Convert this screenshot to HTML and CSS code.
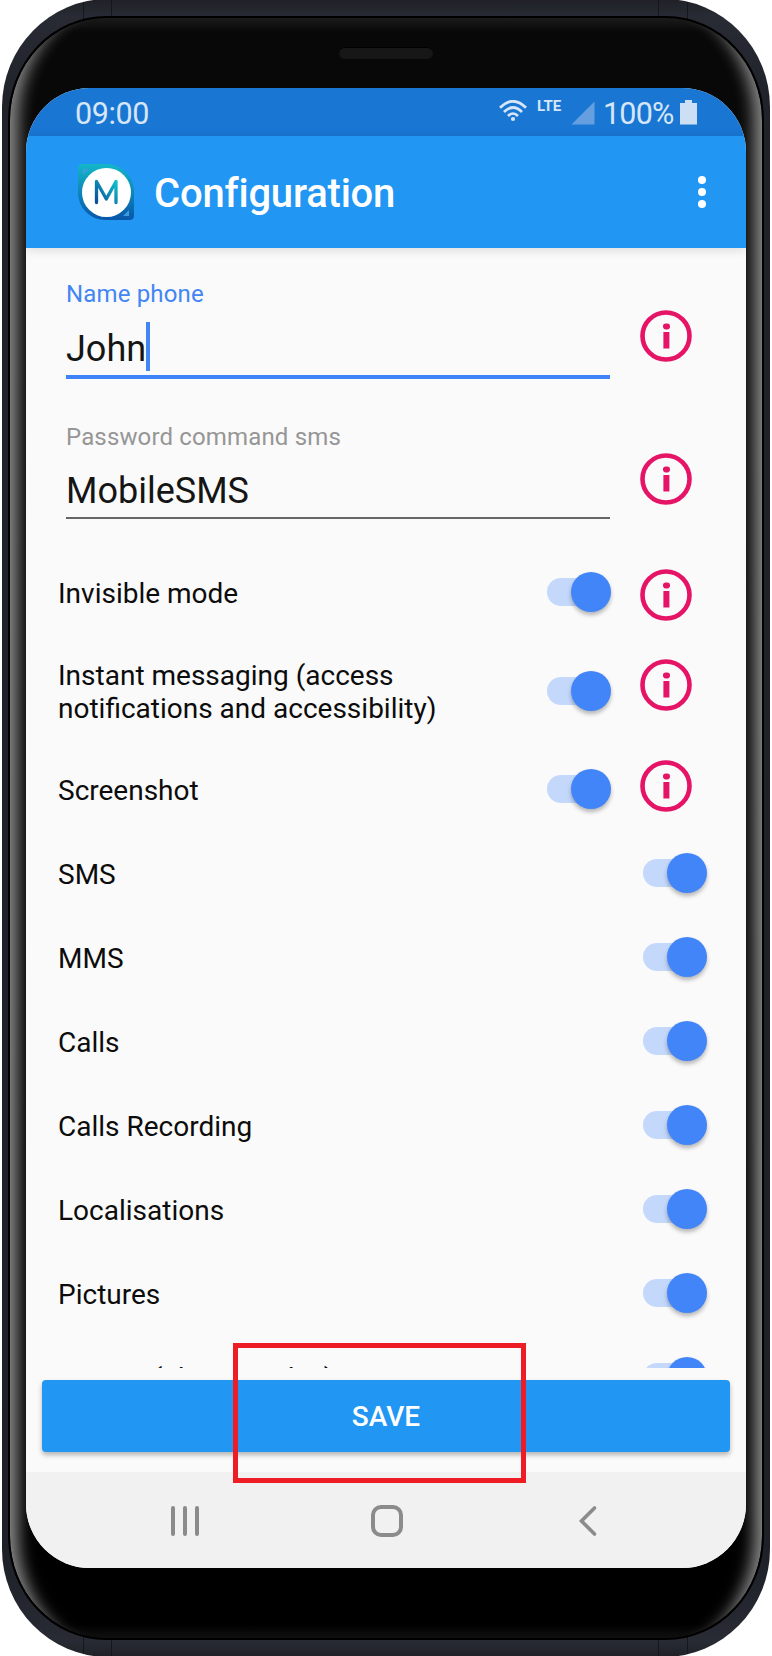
FILE: index.html
```html
<!DOCTYPE html>
<html lang="en">
<head>
<meta charset="utf-8">
<title>Configuration</title>
<link rel="stylesheet" href="styles.css">
</head>
<body>
<svg class="defs" width="0" height="0">
  <symbol id="info" viewBox="0 0 52 52">
    <circle cx="26" cy="26" r="23.5" fill="none" stroke="#e51467" stroke-width="4.6"/>
    <rect x="23" y="13.4" width="7" height="6" rx="2.8" fill="#e51467"/>
    <rect x="23.4" y="22" width="6" height="16.5" fill="#e51467"/>
  </symbol>
</svg>
<div class="phone">
  <div class="bezel">
    <div class="earpiece"></div>
    <div class="screen">
      <div class="status">
        <span class="time">09:00</span>
        <svg class="wifi" width="28" height="22" viewBox="0 0 28 22" fill="none" stroke="#d6e6f7" stroke-width="2.7">
          <path d="M1 7.800Q14-5.200 27 7.800"/><path d="M5 12Q14 3 23 12"/><path d="M9 16Q14 11 19 16"/>
          <circle cx="14" cy="19" r="2.100" fill="#d6e6f7" stroke="none"/>
        </svg>
        <span class="lte">LTE</span>
        <svg class="signal" width="24" height="24" viewBox="0 0 24 24"><path d="M0.5 23.5L23.5 0.5V23.5Z" fill="#659fe0"/></svg>
        <span class="percent">100%</span>
        <svg class="battery" width="17" height="25" viewBox="0 0 17 25"><path d="M5 0h7v3h5v21.5H0V3h5z" fill="#cddff4"/></svg>
      </div>
      <div class="appbar">
        <svg class="logo" width="57" height="57" viewBox="0 0 57 57">
          <defs>
            <linearGradient id="lg" x1="0" y1="0" x2="0" y2="1"><stop offset="0" stop-color="#12b7c8"/><stop offset="1" stop-color="#0856aa"/></linearGradient>
            <linearGradient id="mg" x1="1" y1="0" x2="0" y2="1"><stop offset="0" stop-color="#10c0cc"/><stop offset="1" stop-color="#0b4c9a"/></linearGradient>
          </defs>
          <path d="M5 0H28C43 0 56 12 56 28V52Q56 56 51 56H28C12 56 0 44 0 28V5Q0 0 5 0Z" fill="url(#lg)"/>
          <path d="M5 11V5H11ZM51 46V52H45Z" fill="#3d9ce0"/>
          <circle cx="28.500" cy="28.500" r="24.500" fill="#fff"/>
          <path d="M18.500 38.500V17.500L28.300 35L38 17.500V38.500" fill="none" stroke="url(#mg)" stroke-width="3.300" stroke-linejoin="round" stroke-linecap="round"/>
        </svg>
        <h1 class="title">Configuration</h1>
        <svg class="more" width="8" height="32" viewBox="0 0 8 32" fill="#fff"><circle cx="4" cy="4" r="4"/><circle cx="4" cy="16" r="4"/><circle cx="4" cy="28" r="4"/></svg>
      </div>
      <div class="list">
        <div class="field focused">
          <div class="entry"><div class="label">Name phone</div><div class="value">John<i class="caret"></i></div></div>
          <svg class="info"><use href="#info"/></svg>
        </div>
        <div class="field">
          <div class="entry"><div class="label">Password command sms</div><div class="value">MobileSMS</div></div>
          <svg class="info"><use href="#info"/></svg>
        </div>
        <div class="row invisible"><span class="text">Invisible mode</span><span class="switch"></span><svg class="info"><use href="#info"/></svg></div>
        <div class="row instant"><span class="text">Instant messaging (access<br>notifications and accessibility)</span><span class="switch"></span><svg class="info"><use href="#info"/></svg></div>
        <div class="row shot"><span class="text">Screenshot</span><span class="switch"></span><svg class="info"><use href="#info"/></svg></div>
        <div class="row"><span class="text">SMS</span><span class="switch"></span></div>
        <div class="row"><span class="text">MMS</span><span class="switch"></span></div>
        <div class="row"><span class="text">Calls</span><span class="switch"></span></div>
        <div class="row"><span class="text">Calls Recording</span><span class="switch"></span></div>
        <div class="row"><span class="text">Localisations</span><span class="switch"></span></div>
        <div class="row"><span class="text">Pictures</span><span class="switch"></span></div>
        <div class="row last"><span class="text">Picture (photo quality)</span><span class="switch"></span></div>
      </div>
      <div class="footer">
        <div class="save">SAVE</div>
        <div class="highlight"></div>
      </div>
      <div class="nav">
        <svg width="30" height="32" viewBox="0 0 30 32" stroke="#8b8b8b" stroke-width="4" stroke-linecap="round"><path d="M3 3V29M15 3V29M27 3V29"/></svg>
        <svg class="home" width="34" height="34" viewBox="0 0 34 34" fill="none" stroke="#8b8b8b" stroke-width="4"><rect x="3" y="3" width="28" height="28" rx="8"/></svg>
        <svg width="20" height="32" viewBox="0 0 20 32" fill="none" stroke="#8b8b8b" stroke-width="3.600" stroke-linecap="round"><path d="M16.500 3L3.500 16L16.500 29"/></svg>
      </div>
    </div>
  </div>
</div>
</body>
</html>
```
FILE: styles.css
```css
* { box-sizing: border-box; }
body { margin: 0; width: 772px; height: 1656px; overflow: hidden; background: #fff; font-family: Roboto, "Liberation Sans", sans-serif; }
svg { display: block; flex: none; }
.defs { position: absolute; }
.phone {
  width: 768px; height: 1658px; margin: -1px 2px; padding: 17px 6px;
  border-radius: 106px / 108px;
  background:
    linear-gradient(90deg, transparent 81px, #15171b 81px 82px, transparent 82px 109px, #15171b 109px 110px, transparent 110px 656px, #15171b 656px 657px, transparent 657px 685px, #15171b 685px 686px, transparent 686px),
    linear-gradient(#202127, #282b34 17px, #20232a 100px, #1e2128 1560px, #282b34 1642px, #202127);
}
.bezel {
  width: 756px; height: 1624px; padding-top: 70px;
  border: 2px solid #000; border-radius: 98px / 104px;
  background: linear-gradient(#1b1b1b, #080808 14px, #080808 300px, #000 1300px, #000 1606px, #101010);
  box-shadow: inset 36px 0 16px -28px #8a8a8a, inset -36px 0 16px -28px #8a8a8a;
  position: relative;
}
.earpiece { position: absolute; left: 329px; top: 29px; width: 94px; height: 12px; border-radius: 6px; background: #171717; border-top: 1px solid #000; }
.screen { width: 720px; height: 1480px; margin: 0 16px; border-radius: 64px; overflow: hidden; background: #fafafa; display: flex; flex-direction: column; }
.status { height: 48px; flex: none; background: #1976d3; color: #d6e6f7; display: flex; padding: 0 49px 0 49px; font-size: 30.5px; line-height: 52px; }
.time { flex: 1; letter-spacing: -.4px; }
.wifi { margin: 12px 10px 0 0; }
.lte { font-size: 15px; font-weight: 700; line-height: 37px; width: 34px; }
.signal { margin: 13px 8px 0 0; }
.percent { width: 77px; letter-spacing: -.8px; }
.battery { margin-top: 12px; }
.appbar { height: 112px; flex: none; background: #2196f3; color: #fff; display: flex; align-items: center; padding: 0 40px 0 52px; position: relative; box-shadow: 0 2px 10px rgba(0,0,0,.13); }
.title { margin: 3px 0 0 19px; font-size: 40px; font-weight: 500; flex: 1; line-height: 48px; letter-spacing: -.2px; }
.list { height: 1120px; flex: none; overflow: hidden; padding-top: 16px; }
.field { height: 143px; display: flex; padding: 16px 54px 0 40px; justify-content: space-between; }
.entry { width: 544px; }
.label { font-size: 24px; line-height: 28px; letter-spacing: .15px; color: #969696; }
.value { font-size: 36px; line-height: 42px; margin-top: 19px; height: 49px; color: #151515; border-bottom: 2px solid #666; display: flex; }
.focused .label { color: #4285f4; }
.focused .value { border-bottom: 4px solid #3f83f8; height: 52px; line-height: 44px; }
.caret { width: 4px; height: 49px; margin: -5px 0 0; background: #4285f4; }
.info { width: 52px; height: 52px; margin-top: 30px; }
.row { height: 84px; display: flex; align-items: center; padding: 0 39px 0 32px; }
.text { flex: 1; font-size: 28px; line-height: 33px; padding-top: 2px; color: #0c0c0c; white-space: nowrap; }
.switch { position: relative; width: 64px; height: 40px; flex: none; }
.switch::before { content: ""; position: absolute; left: 0; top: 6px; width: 50px; height: 28px; border-radius: 14px; background: #c3d8fb; }
.switch::after { content: ""; position: absolute; right: 0; top: 0; width: 40px; height: 40px; border-radius: 50%; background: #4285f9; box-shadow: 0 3px 4px rgba(0,0,0,.28); }
.invisible, .instant, .shot { padding-right: 54px; }
.row .info { margin: 0 0 0 29px; }
.invisible .info { transform: translateY(3px); }
.instant { height: 114px; }
.instant .info { transform: translateY(-6px); }
.shot { height: 83px; }
.shot .switch { margin-top: -1px; }
.shot .info { transform: translateY(-4px); }
.last .text { padding-top: 2px; }
.footer { height: 104px; flex: none; padding: 12px 16px 20px; position: relative; }
.save { height: 72px; border-radius: 4px; background: #2196f3; color: #fff; font-size: 28px; font-weight: 500; line-height: 74px; text-align: center; box-shadow: 0 3px 5px rgba(0,0,0,.28); }
.highlight { position: absolute; z-index: 2; left: 207px; top: -25px; width: 293px; height: 140px; border: 5px solid #ee1c25; }
.nav { height: 96px; flex: none; background: #f1f1f1; display: flex; align-items: center; justify-content: space-between; padding: 2px 148px 0 144px; }
.home { margin-right: 5px; }
```
